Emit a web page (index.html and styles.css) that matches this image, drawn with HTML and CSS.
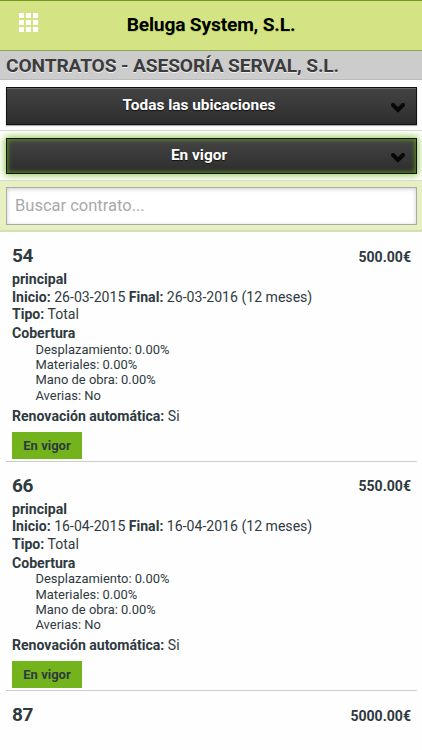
FILE: index.html
```html
<!DOCTYPE html>
<html lang="es">
<head>
    <meta charset="UTF-8">
    <meta name="viewport" content="width=device-width, initial-scale=1.0">
    <title>Beluga System, S.L.</title>
    <link rel="stylesheet" href="styles.css">
</head>
<body>
    <header class="header">
        <svg class="menu-icon" width="20" height="20" viewBox="0 0 20 20" fill="#fff">
            <path d="M0 0h5v5H0zM7 0h5v5H7zM14 0h5v5h-5zM0 7h5v5H0zM7 7h5v5H7zM14 7h5v5h-5zM0 14h5v5H0zM7 14h5v5H7zM14 14h5v5h-5z"/>
        </svg>
        <h1>Beluga System, S.L.</h1>
    </header>
    <h2 class="section-title">CONTRATOS - ASESORÍA SERVAL, S.L.</h2>
    <div class="field">
        <button class="select">
            <span>Todas las ubicaciones</span>
            <svg class="arrow" width="14" height="10" viewBox="0 0 14 10"><path d="M2 2l5 5 5-5"/></svg>
        </button>
    </div>
    <div class="field">
        <button class="select active">
            <span>En vigor</span>
            <svg class="arrow" width="14" height="10" viewBox="0 0 14 10"><path d="M2 2l5 5 5-5"/></svg>
        </button>
    </div>
    <div class="search">
        <input type="text" placeholder="Buscar contrato...">
    </div>

    <div class="list">
        <article class="contract">
            <div class="top">
                <h3>54</h3>
                <span class="price">500.00€</span>
            </div>
            <p><b>principal</b></p>
            <p><b>Inicio:</b> 26-03-2015 <b>Final:</b> 26-03-2016 (12 meses)</p>
            <p><b>Tipo:</b> Total</p>
            <p class="cover"><b>Cobertura</b></p>
            <ul>
                <li>Desplazamiento: 0.00%</li>
                <li>Materiales: 0.00%</li>
                <li>Mano de obra: 0.00%</li>
                <li>Averias: No</li>
            </ul>
            <p class="renew"><b>Renovación automática:</b> Si</p>
            <div class="badge">En vigor</div>
        </article>
        <article class="contract">
            <div class="top">
                <h3>66</h3>
                <span class="price">550.00€</span>
            </div>
            <p><b>principal</b></p>
            <p><b>Inicio:</b> 16-04-2015 <b>Final:</b> 16-04-2016 (12 meses)</p>
            <p><b>Tipo:</b> Total</p>
            <p class="cover"><b>Cobertura</b></p>
            <ul>
                <li>Desplazamiento: 0.00%</li>
                <li>Materiales: 0.00%</li>
                <li>Mano de obra: 0.00%</li>
                <li>Averias: No</li>
            </ul>
            <p class="renew"><b>Renovación automática:</b> Si</p>
            <div class="badge">En vigor</div>
        </article>
        <article class="contract last">
            <div class="top">
                <h3>87</h3>
                <span class="price">5000.00€</span>
            </div>
        </article>
    </div>
</body>
</html>
```
FILE: styles.css
```css
* {
    padding: 0;
    margin: 0;
    box-sizing: border-box;
    font-family: Roboto, sans-serif;
}
body {
    background: #fefefe;
    color: #2f3a3f;
    font-size: 14.080px;
}
.header {
    display: grid;
    grid-template-columns: 38px 1fr 38px;
    height: 51px;
    background: #d4e384;
    border-top: 1px solid #6b9a1f;
    border-bottom: 1px solid #8aa84c;
}
.menu-icon {
    margin: 12px 0 0 19px;
}
.header h1 {
    font-size: 19.200px;
    letter-spacing: -0.180px;
    line-height: 47px;
    text-align: center;
    color: #000;
    text-shadow: 0 1px 0 #b5d34e;
}
.section-title {
    height: 29px;
    padding-left: 6px;
    background: #ccc;
    border-bottom: 1px solid #bbb;
    font-size: 19.200px;
    letter-spacing: -0.140px;
    line-height: 29px;
    color: #3c3c3c;
    text-shadow: 0 1px 0 #eee;
}
.field {
    height: 51px;
    padding: 7px 5px 0 6px;
    border-bottom: 1px solid #d9d9d9;
}
.field + .field {
    height: 50px;
}
.select {
    display: flex;
    align-items: center;
    width: 100%;
    height: 38px;
    padding: 0 11px 0 0;
    background: linear-gradient(#444, #2d2d2d);
    border: 1px solid #111;
    box-shadow: inset 0 1px 0 #666, 0 1px 1px rgba(0, 0, 0, 0.3);
    color: #fff;
    font-size: 15.400px;
    font-weight: bold;
    text-shadow: 0 1px 1px #111;
}
.select span {
    flex: 1;
    padding-bottom: 2px;
}
.select.active {
    height: 36px;
    box-shadow: inset 0 0 4px 1px #5d8c26, 0 0 7px 1px #8cc63f;
}
.select.active span {
    padding-bottom: 3px;
}
.arrow {
    margin-top: 4px;
    fill: none;
    stroke: #080808;
    stroke-width: 4;
    stroke-linecap: round;
}
.search {
    height: 51px;
    padding: 6px 5px 0 6px;
    background: #e7f0c0;
    border-bottom: 2px solid #d5dfb2;
}
.search input {
    display: block;
    width: 100%;
    height: 38px;
    padding: 0 8px 2px;
    background: #fff;
    border: 1px solid #aaa;
    box-shadow: inset 0 1px 4px rgba(0, 0, 0, 0.2);
    font-size: 16.500px;
}
.search input::placeholder {
    color: #a9a9a9;
}
.contract {
    height: 229.500px;
    margin: 0 5px 0 6px;
    padding: 11px 6px 0;
    border-bottom: 1px solid #ccc;
}
.contract.last {
    height: 58px;
    border-bottom: none;
}
.top {
    display: flex;
    justify-content: space-between;
    align-items: center;
    height: 28px;
}
.top h3 {
    padding-bottom: 3px;
    font-size: 19px;
    letter-spacing: -0.300px;
}
.price {
    padding-bottom: 1px;
    font-weight: bold;
}
.contract p {
    height: 17.700px;
    line-height: 17.500px;
}
.contract .cover {
    line-height: 18.500px;
}
.contract ul {
    padding: 0 0 0 23.500px;
    list-style: none;
    font-size: 12.950px;
}
.contract li {
    height: 15.300px;
    line-height: 15.300px;
}
.contract .renew {
    margin: 4px 0 7px;
    line-height: 19px;
}
.badge {
    display: inline-block;
    width: 70px;
    height: 27px;
    background: #73b41c;
    font-size: 13px;
    font-weight: bold;
    line-height: 27px;
    text-align: center;
}
```
